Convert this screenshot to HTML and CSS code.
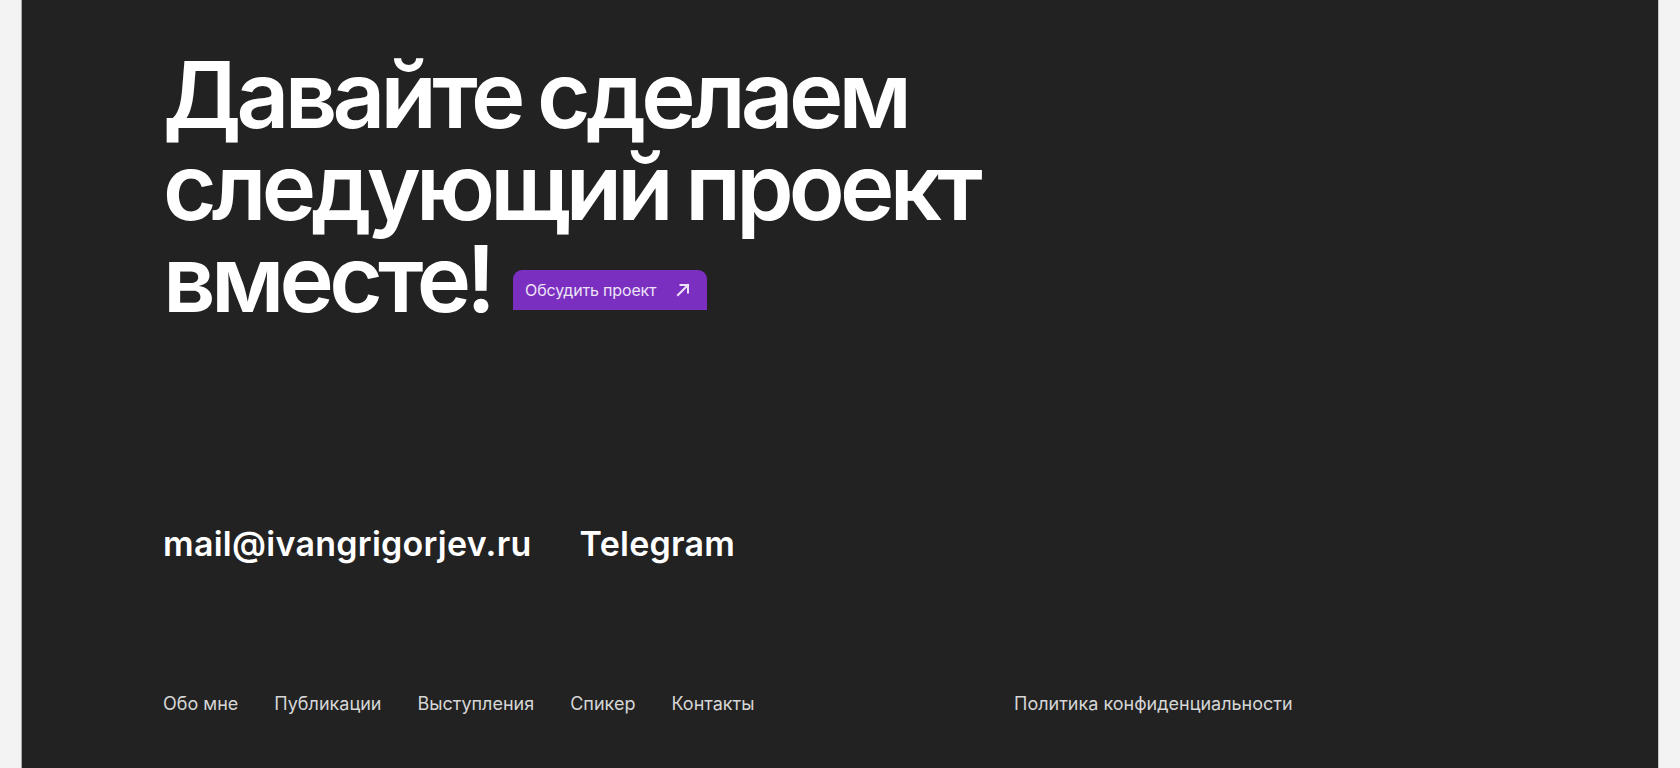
FILE: index.html
```html
<!DOCTYPE html>
<html lang="ru">
<head>
<meta charset="utf-8">
<title>Footer</title>
<link rel="stylesheet" href="styles.css">
</head>
<body>
<footer class="footer">
  <div class="inner">
    <h2 class="title">Давайте сделаем<br>следующий проект<br>вместе!<a class="cta" href="#"><span>Обсудить проект</span><svg class="arrow" width="14" height="14" viewBox="0 0 14 14" fill="none"><path d="M2 12L12 2M4.5 2H12V9.5" stroke="currentColor" stroke-width="2" stroke-linecap="square"/></svg></a></h2>
    <div class="contacts">
      <a class="contact" href="#">mail@ivangrigorjev.ru</a>
      <a class="contact" href="#">Telegram</a>
    </div>
    <div class="bottom">
      <nav class="menu">
        <a href="#">Обо мне</a>
        <a href="#">Публикации</a>
        <a href="#">Выступления</a>
        <a href="#">Спикер</a>
        <a href="#">Контакты</a>
      </nav>
      <a class="policy" href="#">Политика конфиденциальности</a>
    </div>
  </div>
</footer>
</body>
</html>
```
FILE: styles.css
```css
html, body {
  margin: 0;
  padding: 0;
  background: #f3f3f3;
  height: 100%;
}
body {
  padding: 0 21px;
  font-family: Inter, "Noto Sans", sans-serif;
}
.footer {
  background: #222222;
  border-left: 1px solid #a8a8a8;
  border-right: 1px solid #c8c8c8;
  min-height: 768px;
  box-sizing: border-box;
}
.inner {
  padding: 49px 0 0 141px;
}
.title {
  margin: 0;
  color: #ffffff;
  font-size: 92px;
  line-height: 92px;
  font-weight: 600;
  letter-spacing: -0.052em;
  word-spacing: -0.02em;
}
.cta {
  display: inline-flex;
  align-items: center;
  gap: 20px;
  height: 40px;
  box-sizing: border-box;
  padding: 0 17px 0 12px;
  margin-left: 22px;
  background: #7b2fc0;
  border-radius: 9px 9px 0 0;
  color: #ece3f7;
  font-size: 16px;
  font-weight: 400;
  letter-spacing: -0.01em;
  word-spacing: 0;
  text-decoration: none;
  vertical-align: 16px;
}
.arrow {
  display: block;
}
.contacts {
  display: flex;
  gap: 48px;
  margin-top: 199px;
}
.contact {
  color: #ffffff;
  font-size: 34px;
  line-height: 40px;
  font-weight: 600;
  letter-spacing: 0.008em;
  text-decoration: none;
}
.bottom {
  display: grid;
  grid-template-columns: 851px auto;
  margin-top: 128px;
}
.menu {
  display: flex;
  gap: 36px;
}
.menu a, .policy {
  color: #d6d6d6;
  font-size: 18px;
  line-height: 24px;
  font-weight: 400;
  letter-spacing: 0;
  text-decoration: none;
}
```
